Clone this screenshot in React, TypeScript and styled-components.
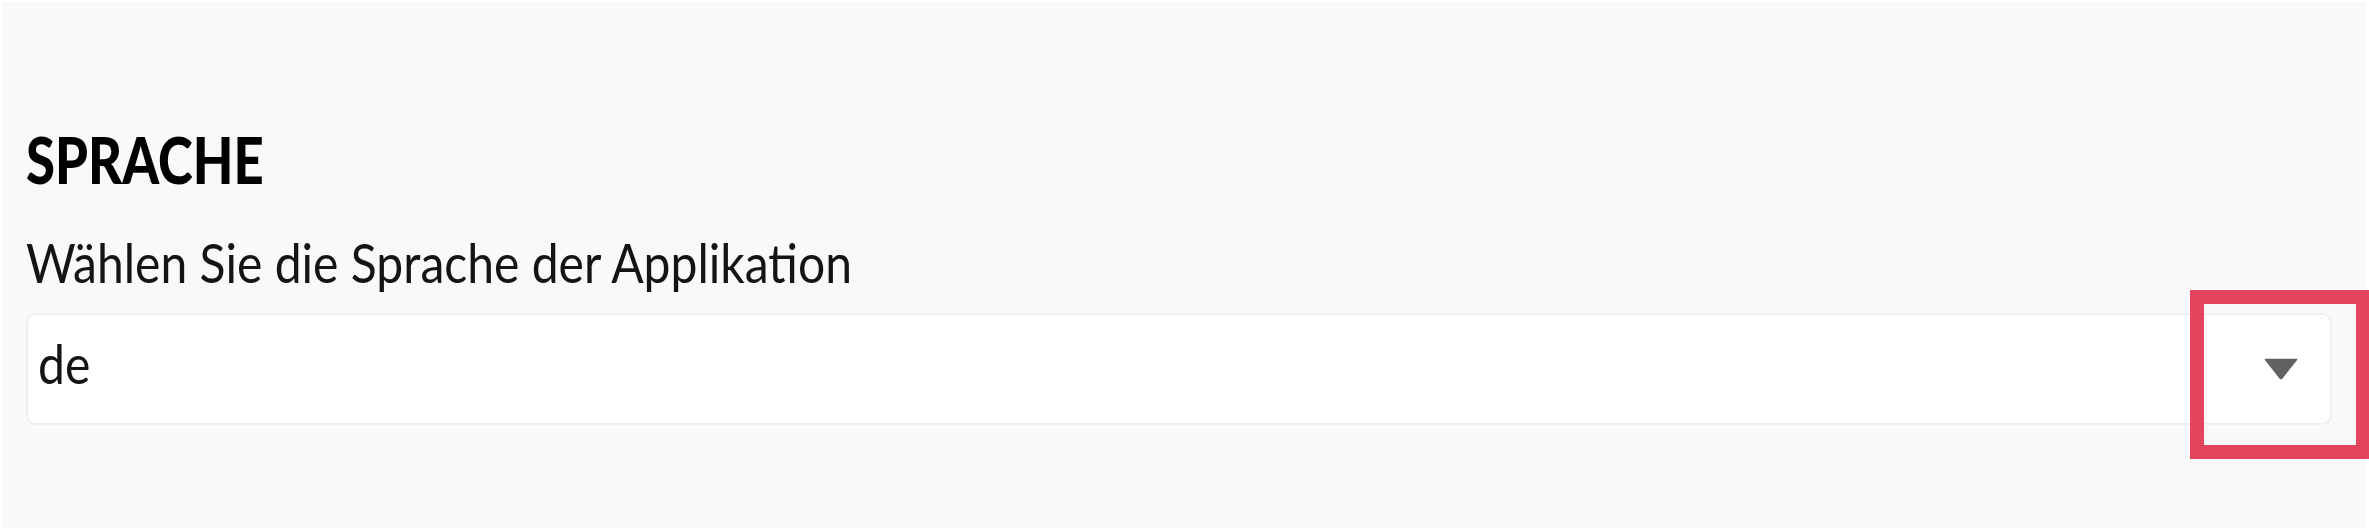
import * as React from 'react'
import styled, { createGlobalStyle } from 'styled-components'

const GlobalStyle = createGlobalStyle`
  html, body {
    margin: 0;
    padding: 0;
    background: #ffffff;
    font-family: Lato, "Open Sans", sans-serif;
  }
`

const Page = styled.div`
  position: relative;
  width: 2369px;
  height: 531px;
  padding: 2px 3px 3px 2px;
  box-sizing: border-box;
`

const Panel = styled.section`
  height: 100%;
  background: #f9f9f9;
  box-sizing: border-box;
  padding: 125px 34px 0 24px;
  display: flex;
  flex-direction: column;
  align-items: stretch;
`

// the source screenshot is squeezed horizontally, so text is narrowed to match
const Heading = styled.h2`
  margin: 0;
  font-family: Lato, sans-serif;
  font-weight: 900;
  font-size: 65px;
  line-height: 65px;
  color: #000;
  text-transform: uppercase;
  transform: scaleX(0.81);
  transform-origin: left center;
`

const Label = styled.label`
  margin-top: 44px;
  font-family: Lato, sans-serif;
  font-size: 54px;
  line-height: 54px;
  color: #141414;
  transform: scaleX(0.89);
  transform-origin: left center;
`

const SelectBox = styled.div`
  margin-top: 23px;
  height: 112px;
  box-sizing: border-box;
  background: #fff;
  border: 2px solid #efefef;
  border-radius: 10px;
  display: flex;
  align-items: center;
  justify-content: space-between;
  padding: 0 32px 10px 10px;
`

const SelectValue = styled.span`
  font-family: Lato, sans-serif;
  font-size: 54px;
  line-height: 54px;
  color: #141414;
  transform: scaleX(0.89);
  transform-origin: left center;
`

const Caret = styled.svg`
  width: 34px;
  height: 22px;
  margin-top: 10px;
`

const Highlight = styled.div<{ left: number; top: number; w: number; h: number }>`
  position: absolute;
  left: ${({ left }) => left}px;
  top: ${({ top }) => top}px;
  width: ${({ w }) => w}px;
  height: ${({ h }) => h}px;
  box-sizing: border-box;
  border: 14px solid #e5445f;
  pointer-events: none;
`

export default function App() {
  return (
    <>
      <GlobalStyle />
      <Page>
        <Panel>
          <Heading>Sprache</Heading>
          <Label>Wählen Sie die Sprache der Applikation</Label>
          <SelectBox>
            <SelectValue>de</SelectValue>
            <Caret viewBox="0 0 34 22">
              <path d="M1.5 1.5 H32.5 L18 20 Q17 21.2 16 20 Z" fill="#616161" stroke="#616161" strokeLinejoin="round" strokeWidth="1.5" />
            </Caret>
          </SelectBox>
        </Panel>
        <Highlight left={2190} top={290} w={180} h={169} />
      </Page>
    </>
  )
}
